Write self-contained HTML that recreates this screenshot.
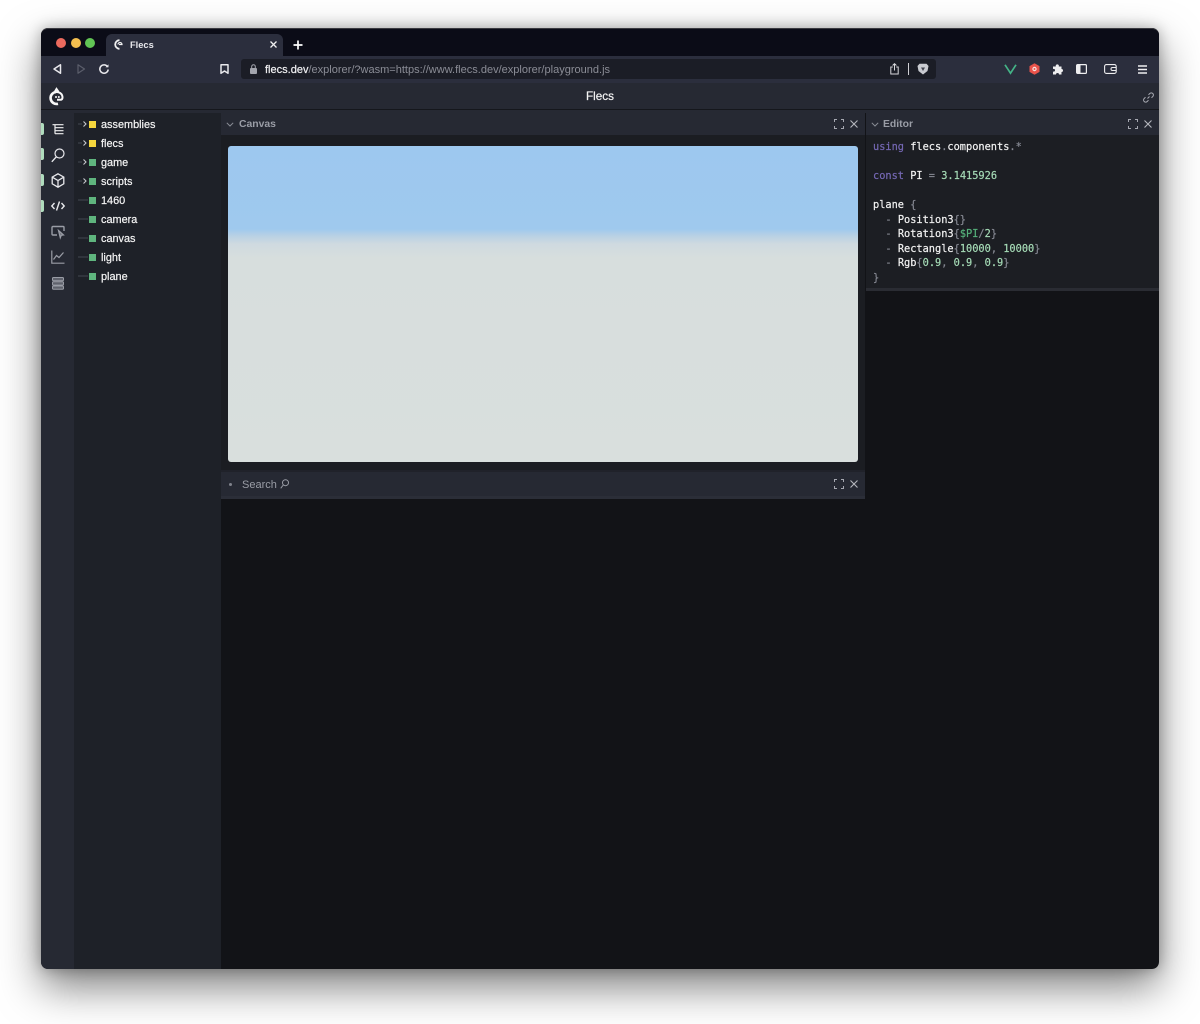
<!DOCTYPE html>
<html><head><meta charset="utf-8"><style>
*{box-sizing:border-box;margin:0;padding:0}
html,body{width:1200px;height:1024px;overflow:hidden;background:#fff;font-family:"Liberation Sans",sans-serif}
.a{position:absolute}
svg{position:absolute;overflow:visible;fill:none}
.t{position:absolute;white-space:nowrap;line-height:14px}
#win{position:absolute;left:41px;top:28px;width:1118px;height:941px;border-radius:7px;box-shadow:0 18px 42px rgba(0,0,0,.5),0 0 14px rgba(0,0,0,.28);}
#in{position:absolute;left:41px;top:28px;width:1118px;height:941px;border-radius:7px;overflow:hidden;background:#121317}
.tree{font-size:10.900px;color:#f4f4f4;left:101px;-webkit-text-stroke:.2px #f4f4f4}
.sq{position:absolute;left:89px;width:7px;height:7px}
.hd{color:#9a9da6;font-size:10.400px;font-weight:bold}
pre{position:absolute;left:873px;top:139.600px;font:10.300px/14.600px "DejaVu Sans Mono",monospace;color:#858892;-webkit-text-stroke:.2px}
pre b{font-weight:normal;color:#f2f2f2}pre i{font-style:normal;color:#7568b4}pre u{text-decoration:none;color:#a5dbb6}pre s{text-decoration:none;color:#55b07a}
</style></head><body>
<div id="win"></div>
<div id="in"></div>
<!-- tab strip -->
<div class="a" style="left:41px;top:28px;width:1118px;height:28px;background:#0b0c17;border-radius:7px 7px 0 0;border-top:1px solid #3a3a40"></div>
<div class="a" style="left:56px;top:38px;width:10px;height:10px;border-radius:50%;background:#ec6a5e"></div>
<div class="a" style="left:71px;top:38px;width:10px;height:10px;border-radius:50%;background:#f4bf4f"></div>
<div class="a" style="left:85px;top:38px;width:10px;height:10px;border-radius:50%;background:#61c554"></div>
<div class="a" style="left:106px;top:34px;width:177px;height:22px;background:#2b2e3d;border-radius:6px 6px 0 0"></div>
<svg style="left:113px;top:39px" width="11" height="11" viewBox="0 0 11 11"><path d="M6.500 1.200A4.300 4.300 0 1 0 6.500 9.800" stroke="#f2f2f2" stroke-width="1.800"/><path d="M5 5.500a2 2 0 0 1 4 0h-3" stroke="#f2f2f2" stroke-width="1.200"/></svg>
<div class="t" style="left:130px;top:38px;font-size:9.300px;font-weight:bold;color:#e8e8ec">Flecs</div>
<svg style="left:270px;top:41px" width="7" height="7"><path d="M.5.500l6 6M6.500.5l-6 6" stroke="#f0f0f0" stroke-width="1.300"/></svg>
<svg style="left:293px;top:40px" width="10" height="10"><path d="M5 .5v9M.5 5h9" stroke="#fff" stroke-width="1.700"/></svg>
<!-- toolbar -->
<div class="a" style="left:41px;top:56px;width:1118px;height:27px;background:#2b2e3d"></div>
<svg style="left:53px;top:64px" width="9" height="10"><path d="M7.500 .8v8.400L1 5z" stroke="#e8e8ec" stroke-width="1.500" stroke-linejoin="round"/></svg>
<svg style="left:77px;top:64px" width="9" height="10"><path d="M1 .8v8.400L7.500 5z" stroke="#5b5e6b" stroke-width="1.200" stroke-linejoin="round"/></svg>
<svg style="left:99px;top:64px" width="10" height="10"><path d="M8.700 3A4.200 4.200 0 1 0 9.200 5.500" stroke="#e8e8ec" stroke-width="1.500"/><path d="M6.500 3.300H9.500V.4" fill="#e8e8ec"/></svg>
<svg style="left:220px;top:64px" width="9" height="10"><path d="M1 .7h7v8.600L4.500 7 1 9.300z" stroke="#e8e8ec" stroke-width="1.500" stroke-linejoin="round"/></svg>
<div class="a" style="left:241px;top:59px;width:695px;height:20px;background:#1b1d26;border-radius:3px"></div>
<div class="a" style="left:250px;top:68px;width:7px;height:5.500px;background:#a3a5ad;border-radius:1px"></div>
<svg style="left:251px;top:64px" width="5" height="5"><path d="M.7 4.500V2.500a1.800 1.800 0 0 1 3.600 0v2" stroke="#a3a5ad"/></svg>
<div class="t" style="left:265px;top:63px;font-size:11.030px;color:#8b8d96"><span style="color:#f0f0f2;-webkit-text-stroke:.2px #f0f0f2">flecs.dev</span>/explorer/?wasm=https://www.flecs.dev/explorer/playground.js</div>
<svg style="left:890px;top:63px" width="9" height="12"><path d="M2.800 4H.8v7h7.400V4H6.200M4.500 7.500V.8M2.600 2.500L4.500.7l1.900 1.800" stroke="#d8d8dc" stroke-width="1"/></svg>
<div class="a" style="left:908px;top:63px;width:1px;height:12px;background:#d0d0d5"></div>
<svg style="left:917px;top:63px" width="12" height="12"><path d="M2.500.8h7L11.500 3l-1 5L6 11.500 1.500 8l-1-5z" fill="#c9cbd1"/><path d="M4 4.500h4L6 8z" fill="#40424d"/></svg>
<svg style="left:1004px;top:64px" width="13" height="10"><path d="M1 .8l5.500 8.400L12 .8" stroke="#44b487" stroke-width="1.700"/></svg>
<svg style="left:1029px;top:63px" width="11" height="12"><path d="M5.500 .3l5 2.800v5.800l-5 2.800-5-2.800V3.100z" fill="#e9534b"/><circle cx="5.500" cy="6" r="2.200" fill="#f7e4e2"/><circle cx="5.500" cy="6" r="1" fill="#e9534b"/></svg>
<svg style="left:1052px;top:63px" width="12" height="12"><path d="M1 3.500h2.800a1.600 1.600 0 1 1 3 0h2.700v2.500a1.500 1.500 0 1 1 0 3v2.500H7a1.500 1.500 0 1 0-3 0H1V8.500a1.400 1.400 0 1 0 0-2.500z" fill="#eeeef0"/></svg>
<svg style="left:1076px;top:64px" width="11" height="10"><rect x=".6" y=".6" width="9.800" height="8.800" rx="1" stroke="#eeeef0" stroke-width="1.200"/><rect x="1" y="1" width="3.500" height="8" fill="#eeeef0"/></svg>
<svg style="left:1104px;top:64px" width="13" height="10"><rect x=".6" y=".6" width="11.600" height="8.800" rx="1.800" stroke="#eeeef0" stroke-width="1.100"/><path d="M12 3.500H8.500a1.500 1.500 0 0 0 0 3H12" stroke="#eeeef0" stroke-width="1"/></svg>
<svg style="left:1138px;top:65px" width="9" height="9"><path d="M0 1h9M0 4.500h9M0 8h9" stroke="#eeeef0" stroke-width="1.400"/></svg>
<!-- app header -->
<div class="a" style="left:41px;top:83px;width:1118px;height:26px;background:#262933"></div>
<div class="a" style="left:41px;top:109px;width:1118px;height:1px;background:#15171c"></div>
<div class="a" style="left:41px;top:110px;width:1118px;height:3px;background:#262933"></div>
<svg style="left:48px;top:88px" width="17" height="18" viewBox="0 0 17 18"><path d="M8 4A6 6 0 1 0 10 15.800" stroke="#f8f8f8" stroke-width="2.600"/><path d="M7 3.500L8.500 1l2 2.800M7 4.200c4-1 7.500 1.500 7.500 5.300 0 1-.5 2-1.500 2.300H9" stroke="#f8f8f8" stroke-width="2"/><circle cx="8" cy="9" r="1" fill="#f8f8f8"/><circle cx="10.800" cy="9" r="1" fill="#f8f8f8"/></svg>
<div class="t" style="left:586px;top:90px;font-size:11.700px;color:#f4f4f4;-webkit-text-stroke:.2px #f4f4f4">Flecs</div>
<svg style="left:1143px;top:92px" width="11" height="11" fill="none"><path d="M4.500 6.500l2-2M5.500 2.800l1.300-1.300a2.100 2.100 0 0 1 3 3L8.500 5.800M5.500 8.200L4.200 9.500a2.100 2.100 0 0 1-3-3L2.500 5.200" stroke="#a9abb3" stroke-width="1"/></svg>
<!-- rail -->
<div class="a" style="left:41px;top:113px;width:33px;height:856px;background:#262933;border-radius:0 0 0 7px"></div>
<div class="a" style="left:41px;top:123px;width:3px;height:12px;background:#b0dcbd;border-radius:0 2px 2px 0"></div>
<div class="a" style="left:41px;top:148px;width:3px;height:12px;background:#b0dcbd;border-radius:0 2px 2px 0"></div>
<div class="a" style="left:41px;top:174px;width:3px;height:12px;background:#b0dcbd;border-radius:0 2px 2px 0"></div>
<div class="a" style="left:41px;top:200px;width:3px;height:12px;background:#b0dcbd;border-radius:0 2px 2px 0"></div>
<svg style="left:52px;top:124px" width="12" height="11"><path d="M.5.700h11M3 3.700h8.500M3 6.700h8.500M3 9.700h8.500M3 .7v9" stroke="#eeeef0" stroke-width="1.200"/></svg>
<svg style="left:51px;top:148px" width="14" height="15"><circle cx="8.500" cy="5.500" r="4.500" stroke="#e8e8ec" stroke-width="1.200"/><path d="M5.300 8.800L.8 13.800" stroke="#e8e8ec" stroke-width="1.400"/></svg>
<svg style="left:51px;top:173px" width="14" height="15"><path d="M7 .8l5.800 3.300v6.700L7 14.200l-5.800-3.400V4.100zM1.500 4.300L7 7.500l5.500-3.200M7 7.500v6.500" stroke="#e8e8ec" stroke-width="1.300"/></svg>
<svg style="left:51px;top:200px" width="14" height="12"><path d="M3.500 3L.8 6l2.700 3M10.500 3L13.200 6l-2.700 3M8.500 1.500L5.500 10.500" stroke="#e8e8ec" stroke-width="1.400"/></svg>
<svg style="left:51px;top:225px" width="14" height="14"><path d="M6 10H2a1 1 0 0 1-1-1V2.500a1 1 0 0 1 1-1h10a1 1 0 0 1 1 1V6" stroke="#9a9da6" stroke-width="1.400"/><path d="M7.500 5.500l5 4.500-2.200.3-1 2.500z" stroke="#9a9da6" stroke-width="1.200" fill="#70737c"/></svg>
<svg style="left:51px;top:250px" width="14" height="14"><path d="M.8 .5v12.700h12.700M2.500 9.500l3-4 2.500 2 4.500-5" stroke="#9a9da6" stroke-width="1.200"/></svg>
<svg style="left:52px;top:277px" width="12" height="13"><g stroke="#9a9da6" stroke-width="1" fill="#5f626c"><rect x=".5" y=".5" width="11" height="3.300" rx="1"/><rect x=".5" y="4.800" width="11" height="3.300" rx="1"/><rect x=".5" y="9" width="11" height="3.300" rx="1"/></g></svg>
<!-- tree -->
<div class="a" style="left:74px;top:113px;width:147px;height:856px;background:#1e2128"></div>
<svg style="left:78px;top:120px" width="10" height="158"><g stroke="#c5c7cc" stroke-width="1.100"><path d="M5.500 1.500L8 4 5.500 6.500M5.500 20.500L8 23 5.500 25.500M5.500 39.500L8 42 5.500 44.500M5.500 58.500L8 61 5.500 63.500"/></g><g stroke="#43464f" stroke-width="1"><path d="M0 4h4M0 23h4M0 42h4M0 61h4M0 80h10M0 99h10M0 118h10M0 137h10M0 156h10"/></g></svg>
<div class="sq" style="top:121px;background:#f5d63d"></div>
<div class="sq" style="top:140px;background:#f5d63d"></div>
<div class="sq" style="top:159px;background:#5fb57e"></div>
<div class="sq" style="top:178px;background:#5fb57e"></div>
<div class="sq" style="top:197px;background:#5fb57e"></div>
<div class="sq" style="top:216px;background:#5fb57e"></div>
<div class="sq" style="top:235px;background:#5fb57e"></div>
<div class="sq" style="top:254px;background:#5fb57e"></div>
<div class="sq" style="top:273px;background:#5fb57e"></div>
<div class="t tree" style="top:118px">assemblies</div>
<div class="t tree" style="top:137px">flecs</div>
<div class="t tree" style="top:156px">game</div>
<div class="t tree" style="top:175px">scripts</div>
<div class="t tree" style="top:194px">1460</div>
<div class="t tree" style="top:213px">camera</div>
<div class="t tree" style="top:232px">canvas</div>
<div class="t tree" style="top:251px">light</div>
<div class="t tree" style="top:270px">plane</div>
<!-- canvas pane -->
<div class="a" style="left:221px;top:113px;width:644px;height:22px;background:#262933"></div>
<div class="a" style="left:221px;top:135px;width:644px;height:335px;background:#1b1d22"></div>
<svg style="left:226px;top:122px" width="8" height="5"><path d="M.8.800L4 4 7.200.8" stroke="#8a8d96"/></svg>
<div class="t hd" style="left:239px;top:118px">Canvas</div>
<svg style="left:834px;top:119px" width="10" height="10"><path d="M.5 3V.5H3M7 .5h2.500V3M9.500 7v2.500H7M3 9.500H.5V7" stroke="#a5a7b0" stroke-width="1"/></svg>
<svg style="left:850px;top:120px" width="8" height="8"><path d="M.5.500l7 7M7.500.5l-7 7" stroke="#b5b7bd" stroke-width="1.100"/></svg>
<div class="a" style="left:228px;top:146px;width:630px;height:316px;border-radius:3px;background:linear-gradient(#9dc8ef 0,#9fc9ee 83px,#b9d1e4 90px,#cfdae0 98px,#d7dedd 112px,#d9dfdd 100%)"></div>
<!-- search pane -->
<div class="a" style="left:221px;top:470px;width:644px;height:2px;background:#20222a"></div>
<div class="a" style="left:221px;top:472px;width:644px;height:24px;background:#262933"></div>
<div class="a" style="left:221px;top:496px;width:644px;height:3px;background:#2b2e38"></div>
<div class="a" style="left:229px;top:483px;width:3px;height:3px;border-radius:50%;background:#80838c"></div>
<div class="t" style="left:242px;top:478px;font-size:11px;color:#9a9da6">Search</div>
<svg style="left:280px;top:479px" width="9" height="10"><circle cx="5.500" cy="3.700" r="3" stroke="#9a9da6"/><path d="M3.300 6L.7 9.300" stroke="#9a9da6"/></svg>
<svg style="left:834px;top:479px" width="10" height="10"><path d="M.5 3V.5H3M7 .5h2.500V3M9.500 7v2.500H7M3 9.500H.5V7" stroke="#a5a7b0" stroke-width="1"/></svg>
<svg style="left:850px;top:480px" width="8" height="8"><path d="M.5.500l7 7M7.500.5l-7 7" stroke="#b5b7bd" stroke-width="1.100"/></svg>
<!-- editor -->
<div class="a" style="left:866px;top:113px;width:293px;height:22px;background:#262933"></div>
<div class="a" style="left:866px;top:135px;width:293px;height:153px;background:#1c1e23"></div>
<div class="a" style="left:866px;top:288px;width:293px;height:3px;background:#2a2c33"></div>
<svg style="left:871px;top:122px" width="8" height="5"><path d="M.8.800L4 4 7.200.8" stroke="#8a8d96"/></svg>
<div class="t hd" style="left:883px;top:118px">Editor</div>
<svg style="left:1128px;top:119px" width="10" height="10"><path d="M.5 3V.5H3M7 .5h2.500V3M9.500 7v2.500H7M3 9.500H.5V7" stroke="#a5a7b0" stroke-width="1"/></svg>
<svg style="left:1144px;top:120px" width="8" height="8"><path d="M.5.500l7 7M7.500.5l-7 7" stroke="#b5b7bd" stroke-width="1.100"/></svg>
<pre><i>using</i> <b>flecs</b>.<b>components</b>.*

<i>const</i> <b>PI</b> = <u>3.1415926</u>

<b>plane</b> {
  - <b>Position3</b>{}
  - <b>Rotation3</b>{<s>$PI</s>/<u>2</u>}
  - <b>Rectangle</b>{<u>10000</u>, <u>10000</u>}
  - <b>Rgb</b>{<u>0.9</u>, <u>0.9</u>, <u>0.9</u>}
}</pre>
</body></html>
